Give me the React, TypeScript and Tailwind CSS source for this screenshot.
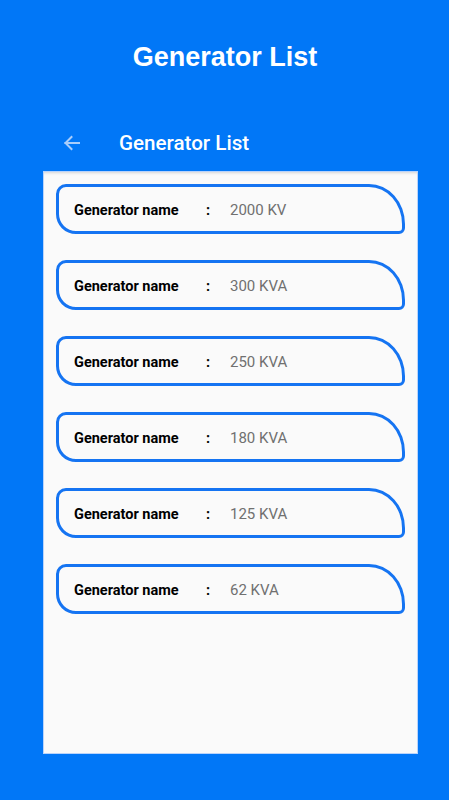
import React from "react";

const ITEMS = ["2000 KV", "300 KVA", "250 KVA", "180 KVA", "125 KVA", "62 KVA"];

function GeneratorCard({ value }: { value: string }) {
  return (
    <div className="h-[50px] flex items-center border-[3px] border-[#1574f2] bg-[#fafafa] rounded-tl-[10px] rounded-bl-[20px] rounded-tr-[36px_40px] rounded-br-[6px] pl-[15px] pt-[2px]">
      <div className="flex items-baseline font-['Roboto',sans-serif]">
        <span className="w-[132px] text-[14.5px] font-bold text-black">Generator name</span>
        <span className="w-[24px] text-[14.5px] font-bold text-black">:</span>
        <span className="text-[15px] text-[#707070]">{value}</span>
      </div>
    </div>
  );
}

export default function App() {
  return (
    <div className="w-[449px] h-[800px] bg-[#0177f7] flex flex-col overflow-hidden">
      {/* Page title */}
      <div className="h-[115px] flex items-center justify-center">
        <h1 className="text-[27px] font-bold text-white font-['Liberation_Sans',Arial,sans-serif] pl-[1px]">
          Generator List
        </h1>
      </div>

      {/* Toolbar */}
      <div className="h-[56px] flex items-center pl-[60px]">
        <svg width="24" height="24" viewBox="0 0 24 24" fill="none" stroke="#a9cdfb" strokeWidth="2" strokeLinecap="square">
          <path d="M19 12H5.5" />
          <path d="M11.5 6l-6 6 6 6" />
        </svg>
        <span className="ml-[35px] text-[20.6px] font-medium text-white font-['Roboto',sans-serif]">
          Generator List
        </span>
      </div>

      {/* List panel */}
      <div className="ml-[43px] w-[375px] h-[583px] bg-[#fafafa] border border-[#b9d3fb] shadow-[inset_0_3px_3px_-2px_rgba(0,0,0,0.15)] px-[12px] pt-[12px] flex flex-col gap-[26px]">
        {ITEMS.map((v) => (
          <GeneratorCard key={v} value={v} />
        ))}
      </div>
    </div>
  );
}
